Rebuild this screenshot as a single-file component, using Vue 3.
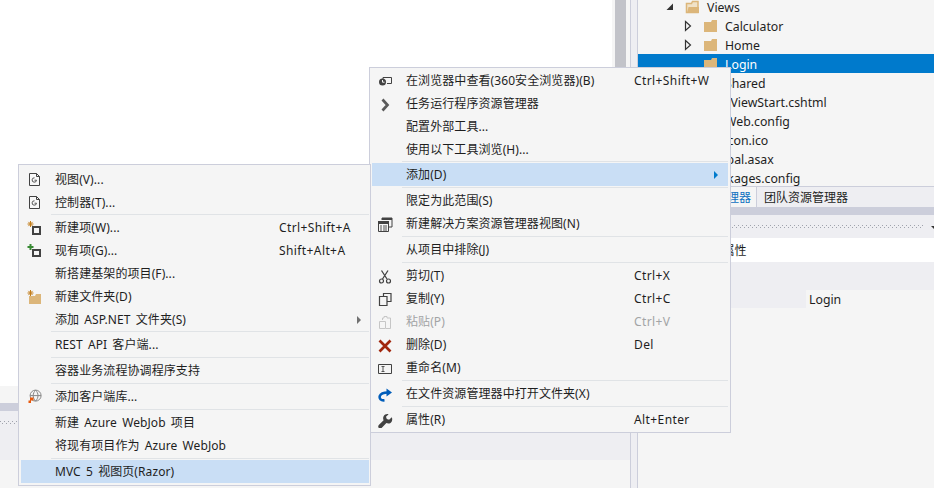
<script setup>
const D = '#424242'
const star = { d: 'M3.5 1v6M.5 4h6M1.4 1.9l4.2 4.2M5.6 1.9 1.4 6.1', s: '#c27d1a', w: 1 }
const icons = {
  doc: [
    { d: 'M2.5 1.5h7l3 3v9h-10z', s: D, w: 1, f: '#f8f8f8' },
    { d: 'M9.5 1.5v3h3', s: D, w: 1 },
    { d: 'M7.5 5.8a2.2 2.2 0 1 0 2 2.4h-2', s: '#555', w: 1 }
  ],
  newItem: [star, { d: 'M6 7h7v7H6z', s: D, w: 2 }],
  addItem: [{ d: 'M3.5 1v6M.5 4h6', s: '#388a34', w: 2 }, { d: 'M6 7h7v6H6z', s: D, w: 2 }],
  newFolder: [{ d: 'M2 7h6l1-2h5v10H2z', f: '#dcb67a' }, star],
  globe: [
    { d: 'M3.1 6.6a5.5 5.5 0 1 1 11 0 5.5 5.5 0 0 1-11 0zM3.1 6.6h11M8.6 1.1c-3.2 3.2-3.2 7.8 0 11M8.6 1.1c3.2 3.2 3.2 7.8 0 11', s: '#888', w: 1 },
    { d: 'M3 8.500h3.500v3H4v2.500H1.500v-2.500H3z', f: '#e8590c' }
  ],
  browser: [
    { d: 'M5 6.500V4.500h8.500v6H9', s: D, w: 1 },
    { d: 'M1 9a3.500 3.500 0 1 0 7 0 3.500 3.500 0 0 0-7 0z', f: D },
    { d: 'M4.500 7v2.200h2', s: '#f5f5f5', w: 1 }
  ],
  chevron: [{ d: 'M4.500 3.500 9.500 9l-5 5.500', s: '#5a5a5a', w: 2.700 }],
  solView: [
    { d: 'M4 4V2h10v9h-3', s: D, w: 1 },
    { d: 'M4 2h10v2H4z', f: D },
    { d: 'M.5 5.500h10v10H.5z', s: D, w: 1, f: '#f5f5f5' },
    { d: 'M0 5h11v3H0z', f: D },
    { d: 'M2 10h2M5 10h4M2 12h2M5 12h4M2 14h2M5 14h4', s: '#555', w: 1 }
  ],
  cut: [
    { d: 'M3.500 2.500 9 11M10 2.500 4.500 11', s: D, w: 1.300 },
    { d: 'M1.500 13a2 2 0 1 0 4 0 2 2 0 0 0-4 0zM8.500 13a2 2 0 1 0 4 0 2 2 0 0 0-4 0z', s: D, w: 1.200 }
  ],
  copy: [
    { d: 'M5.500 5V2.500h7.500v8h-4', s: D, w: 1.200 },
    { d: 'M1.500 5.500h7.500v9H1.500z', s: D, w: 1.200 }
  ],
  paste: [
    { d: 'M4.500 6V4H6V2.500h3V4h3.500v10.500H8', s: '#c6c6c6', w: 1 },
    { d: 'M1.500 7.500h6v7h-6z', s: '#c6c6c6', w: 1 }
  ],
  del: [{ d: 'M1.500 3.500l11 11M12.500 3.500l-11 11', s: '#a1260d', w: 2.700 }],
  rename: [
    { d: 'M.5 4.500h13v9H.5z', s: D, w: 1 },
    { d: 'M3.500 6.500h3M5 6.500v5M3.500 11.500h3', s: '#555', w: 1 }
  ],
  open: [
    { d: 'M6.500 14.300C3 14.800 1 12.500 1.800 10 2.700 7.500 5.500 6.500 10 6.500', s: '#005dba', w: 2.500 },
    { d: 'M8.500 2.500 14 6.500 8.500 10.500z', f: '#005dba' }
  ],
  wrench: [{ d: 'M13.800 5.200l-2.700 2.600-2.300-.8-.8-2.200 2.600-2.500c-1.900-.6-4.100.2-5 1.900-.7 1.300-.6 2.800 0 4l-4.800 4.800c-.8.8-.8 2.100 0 2.900s2 .8 2.800 0l4.800-4.800c1.300.6 2.900.6 4.100-.2 1.600-1 2.200-3.800 1.300-5.700z', f: D }]
}

const rightMenu = [
  { label: '在浏览器中查看(360安全浏览器)(B)', key: 'Ctrl+Shift+W', icon: 'browser' },
  { label: '任务运行程序资源管理器', icon: 'chevron' },
  { label: '配置外部工具...' },
  { label: '使用以下工具浏览(H)...', sep: true, thin: true },
  { label: '添加(D)', arrow: true, hot: true, sep: true },
  { label: '限定为此范围(S)' },
  { label: '新建解决方案资源管理器视图(N)', icon: 'solView', sep: true },
  { label: '从项目中排除(J)', sep: true },
  { label: '剪切(T)', key: 'Ctrl+X', icon: 'cut' },
  { label: '复制(Y)', key: 'Ctrl+C', icon: 'copy' },
  { label: '粘贴(P)', key: 'Ctrl+V', icon: 'paste', off: true },
  { label: '删除(D)', key: 'Del', icon: 'del' },
  { label: '重命名(M)', icon: 'rename', sep: true },
  { label: '在文件资源管理器中打开文件夹(X)', icon: 'open', sep: true },
  { label: '属性(R)', key: 'Alt+Enter', icon: 'wrench' }
]

const leftMenu = [
  { label: '视图(V)...', icon: 'doc' },
  { label: '控制器(T)...', icon: 'doc', sep: true, thin: true },
  { label: '新建项(W)...', key: 'Ctrl+Shift+A', icon: 'newItem' },
  { label: '现有项(G)...', key: 'Shift+Alt+A', icon: 'addItem' },
  { label: '新搭建基架的项目(F)...' },
  { label: '新建文件夹(D)', icon: 'newFolder' },
  { label: '添加 ASP.NET 文件夹(S)', arrow: true, sep: true, thin: true },
  { label: 'REST API 客户端...', sep: true },
  { label: '容器业务流程协调程序支持', sep: true },
  { label: '添加客户端库...', icon: 'globe', sep: true },
  { label: '新建 Azure WebJob 项目' },
  { label: '将现有项目作为 Azure WebJob', sep: true },
  { label: 'MVC 5 视图页(Razor)', hot: true }
]

const menus = [
  { id: 'right', items: rightMenu },
  { id: 'left', items: leftMenu }
]

const tree = [
  { name: 'Views', depth: 0, arrow: 'open', folder: 'open' },
  { name: 'Calculator', depth: 1, arrow: 'closed', folder: 'closed' },
  { name: 'Home', depth: 1, arrow: 'closed', folder: 'closed' },
  { name: 'Login', depth: 1, folder: 'closed', selected: true },
  { name: 'Shared', depth: 1 },
  { name: '_ViewStart.cshtml', depth: 1 },
  { name: 'Web.config', depth: 1 },
  { name: 'favicon.ico', depth: 0 },
  { name: 'Global.asax', depth: 0 },
  { name: 'packages.config', depth: 0 }
]
</script>

<template>
  <div class="screen">
    <section class="editor-col">
      <div class="code">
        <div class="code-body"></div>
        <div class="vscroll"><div class="thumb"></div></div>
      </div>
      <div class="lower-gap"></div>
      <div class="band"></div>
      <div class="panel-head"><div class="grip"></div></div>
      <div class="lower-fill"></div>
    </section>

    <div class="splitter"></div>

    <section class="side-col">
      <div class="tree">
        <div
          v-for="row in tree"
          :key="row.name"
          class="tree-row"
          :class="{ selected: row.selected }"
          :style="{ paddingLeft: 26 + row.depth * 18 + 'px' }"
        >
          <span class="tree-arrow">
            <svg v-if="row.arrow === 'open'" width="12" height="12" viewBox="0 0 12 12">
              <path d="M9 2.500V9H2.500z" fill="#333" />
            </svg>
            <svg v-else-if="row.arrow === 'closed'" width="12" height="12" viewBox="0 0 12 12">
              <path d="M3.500 1.500 8.500 6l-5 4.500z" fill="#f5f5f5" stroke="#333" stroke-width="1.200" />
            </svg>
          </span>
          <span class="tree-icon">
            <svg v-if="row.folder === 'closed'" width="16" height="14" viewBox="0 0 16 14">
              <path d="M2 3h7l1-2h5v12H2z" fill="#dcb67a" />
            </svg>
            <svg v-else-if="row.folder === 'open'" width="16" height="14" viewBox="0 0 16 14">
              <path d="M2.500 12.500V3.500h5l1-2h5.500v11z" fill="#f0e2c8" stroke="#dcb67a" stroke-width="1.500" />
              <path d="M3 13l1.500-6H15v6z" fill="#dcb67a" />
            </svg>
          </span>
          <span class="tree-name">{{ row.name }}</span>
        </div>
      </div>

      <div class="tabs">
        <div class="tab active">解决方案资源管理器</div>
        <div class="tab">团队资源管理器</div>
      </div>
      <div class="band"></div>
      <div class="panel-head side">
        <div class="grip"></div>
        <span class="caret"></span>
      </div>
      <div class="prop-title">Login 文件夹属性</div>
      <div class="prop-gap"></div>
      <div class="prop-row"><span class="prop-value">Login</span></div>
    </section>

    <div v-for="menu in menus" :key="menu.id" class="menu" :class="menu.id">
      <template v-for="item in menu.items" :key="item.label">
        <div class="item" :class="{ hot: item.hot, off: item.off }">
          <span class="item-icon">
            <svg v-if="item.icon" width="16" height="16" viewBox="0 0 16 16">
              <path
                v-for="(p, i) in icons[item.icon]"
                :key="i"
                :d="p.d"
                :fill="p.f || 'none'"
                :stroke="p.s || 'none'"
                :stroke-width="p.w || 0"
              />
            </svg>
          </span>
          <span class="item-label">{{ item.label }}</span>
          <span class="item-key">
            {{ item.key }}
            <i v-if="item.arrow" class="item-arrow"></i>
          </span>
        </div>
        <div v-if="item.sep" class="sep" :class="{ thin: item.thin }"></div>
      </template>
    </div>
  </div>
</template>

<style>
html, body { margin: 0; background: #f5f5f5; }
</style>

<style scoped>
.screen {
  position: relative;
  display: flex;
  width: 934px;
  height: 488px;
  overflow: hidden;
  background: #f5f5f5;
  color: #1e1e1e;
  font: 12px/23px "Noto Sans", "Noto Sans CJK SC", sans-serif;
}
.editor-col {
  display: flex;
  flex-direction: column;
  width: 630px;
  flex: none;
}
.code { display: flex; height: 386px; flex: none; }
.code-body { flex: 1; background: #fff; }
.vscroll { width: 18px; padding-left: 3px; box-sizing: border-box; background: #f5f5f5; }
.thumb { width: 11px; height: 300px; background: #c2c3c9; }
.lower-gap { height: 17px; flex: none; }
.band { height: 8px; flex: none; background: #cccedb; }
.panel-head {
  display: flex;
  align-items: center;
  height: 23px;
  flex: none;
  background: #eeeef2;
}
.grip {
  flex: 1;
  height: 3px;
  background-image: linear-gradient(90deg, #a0a3ad 1px, transparent 1px), linear-gradient(90deg, #a0a3ad 1px, transparent 1px);
  background-size: 4px 1px;
  background-position: 0 0, 2px 2px;
  background-repeat: repeat-x;
}
.lower-fill { height: 26px; flex: none; background: #eeeef2; }
.splitter {
  width: 6px;
  flex: none;
  border-left: 1px solid #cccedb;
  border-right: 1px solid #cccedb;
  background: #eeeef2;
}
.side-col { flex: 1; min-width: 0; display: flex; flex-direction: column; }
.tree { height: 186px; flex: none; overflow: hidden; }
.tree-row {
  display: flex;
  align-items: center;
  height: 19px;
  font-size: 12.3px;
  line-height: 19px;
  white-space: nowrap;
}
.tree-row:first-child {
  height: 16px;
  box-sizing: border-box;
  padding-bottom: 3px;
  line-height: 13px;
}
.tree-row.selected { background: #007acc; color: #fff; }
.tree-arrow { width: 20px; flex: none; display: flex; align-items: center; }
.tree-icon { width: 23px; flex: none; display: flex; align-items: center; }
.tree-name { padding-top: 2px; }
.tabs {
  display: flex;
  height: 21px;
  flex: none;
  box-sizing: border-box;
  background: #eeeef2;
  border-top: 1px solid #cccedb;
  line-height: 21px;
  white-space: nowrap;
}
.tab { padding: 0 7px; border-left: 1px solid #cccedb; }
.tab.active {
  width: 118px;
  box-sizing: border-box;
  padding: 0 0 0 5px;
  border-left: 0;
  background: #f5f5f5;
  color: #0e70c0;
}
.caret {
  width: 0;
  height: 0;
  margin: 1px -3px 0 7px;
  border: 3px solid transparent;
  border-top: 3px solid #333;
  border-bottom: 0;
}
.prop-title {
  height: 24px;
  flex: none;
  background: #fff;
  padding-left: 14px;
  line-height: 26px;
}
.prop-gap { height: 28px; flex: none; background: #eeeef2; }
.prop-row { height: 18px; flex: none; padding-left: 168px; background: #eeeef2; line-height: 20px; font-size: 12.3px; }
.prop-value { display: block; height: 18px; padding-left: 3px; background: #f5f5f5; }
.menu {
  position: absolute;
  box-sizing: border-box;
  border: 1px solid #cccedb;
  background: #f5f5f5;
}
.menu.right { left: 369px; top: 67px; width: 362px; padding: 1px 2px; }
.menu.left { left: 18px; top: 164px; width: 353px; padding: 3px 1px 2px 2px; }
.item { display: flex; height: 23px; white-space: nowrap; }
.item.hot { background: #c9def5; }
.item.off { color: #a2a4a5; }
.item-icon { width: 34px; flex: none; padding-left: 6px; box-sizing: border-box; display: flex; align-items: center; }
.item-label { flex: 1; word-spacing: 2px; letter-spacing: 0.08px; }
.item-key { position: relative; width: 94px; flex: none; letter-spacing: 0.4px; }
.left .item-key { width: 90px; }
.item-arrow {
  position: absolute;
  right: 10px;
  top: 8px;
  width: 0;
  height: 0;
  border: 4px solid transparent;
  border-left: 4px solid #007acc;
  border-right: 0;
}
.left .item-arrow { right: 8px; border-left-color: #717171; }
.sep { height: 1px; margin: 1px 0 1px 30px; background: #e0e3e6; }
.sep.thin { margin-top: 0; }
</style>
